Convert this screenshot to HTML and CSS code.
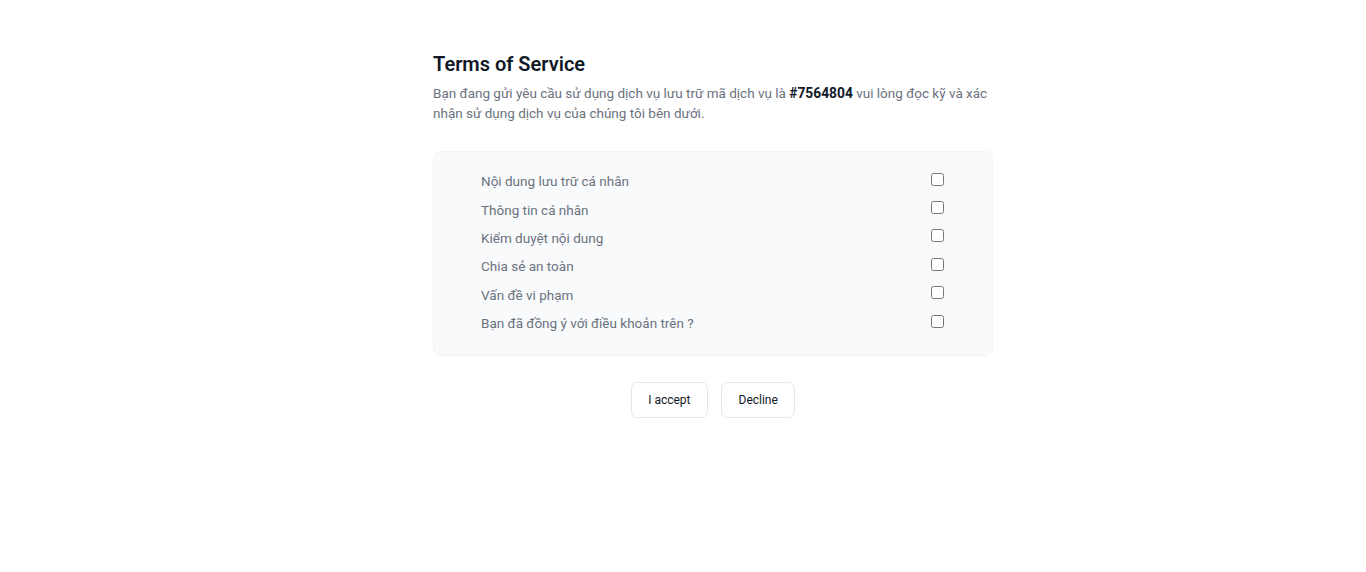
FILE: index.html
```html
<!DOCTYPE html>
<html lang="vi">
<head>
<meta charset="utf-8">
<title>Terms of Service</title>
<link rel="stylesheet" href="styles.css">
</head>
<body>
<main class="page">
  <section class="terms">
    <h1 class="title">Terms of Service</h1>
    <p class="intro">Bạn đang gửi yêu cầu sử dụng dịch vụ lưu trữ mã dịch vụ là <strong>#7564804</strong> vui lòng đọc kỹ và xác nhận sử dụng dịch vụ của chúng tôi bên dưới.</p>
    <div class="box">
      <label class="row"><span>Nội dung lưu trữ cá nhân</span><input type="checkbox"></label>
      <label class="row"><span>Thông tin cá nhân</span><input type="checkbox"></label>
      <label class="row"><span>Kiểm duyệt nội dung</span><input type="checkbox"></label>
      <label class="row"><span>Chia sẻ an toàn</span><input type="checkbox"></label>
      <label class="row"><span>Vấn đề vi phạm</span><input type="checkbox"></label>
      <label class="row"><span>Bạn đã đồng ý với điều khoản trên ?</span><input type="checkbox"></label>
    </div>
    <div class="actions">
      <button class="btn accept">I accept</button>
      <button class="btn decline">Decline</button>
    </div>
  </section>
</main>
</body>
</html>
```

FILE: styles.css
```css
* { box-sizing: border-box; }
html, body { margin: 0; padding: 0; background: #fff; }
body { font-family: Roboto, "Noto Sans", "Liberation Sans", sans-serif; color: #111827; }
.page { display: flex; justify-content: center; padding: 50px 0 0 60px; }
.terms { width: 560px; }
.title { margin: 0; font-size: 20px; line-height: 28px; font-weight: 600; color: #111827; }
.intro { margin: 5px 0 0; font-size: 13.5px; line-height: 20px; color: #6b7280; }
.intro strong { color: #111827; font-weight: 700; font-size: 13.8px; }
.box {
  margin-top: 28px;
  background: #f9fafb;
  border: 1px solid #f3f4f6;
  border-radius: 8px;
  padding: 19px 48px 22px 47px;
  display: flex;
  flex-direction: column;
  gap: 8px;
}
.row { display: flex; justify-content: space-between; align-items: center; height: 20.4px; font-size: 13.5px; color: #6b7280; }
.row input { margin: 0; width: 13px; height: 13px; position: relative; top: -2px; }
.actions { display: flex; justify-content: center; gap: 13px; margin-top: 26px; }
.btn {
  height: 36px;
  padding: 0 16.5px;
  background: #fff;
  border: 1px solid #e5e7eb;
  border-radius: 6px;
  font-family: Roboto, "Noto Sans", sans-serif;
  font-size: 12px;
  font-weight: 400;
  color: #111827;
}
```
